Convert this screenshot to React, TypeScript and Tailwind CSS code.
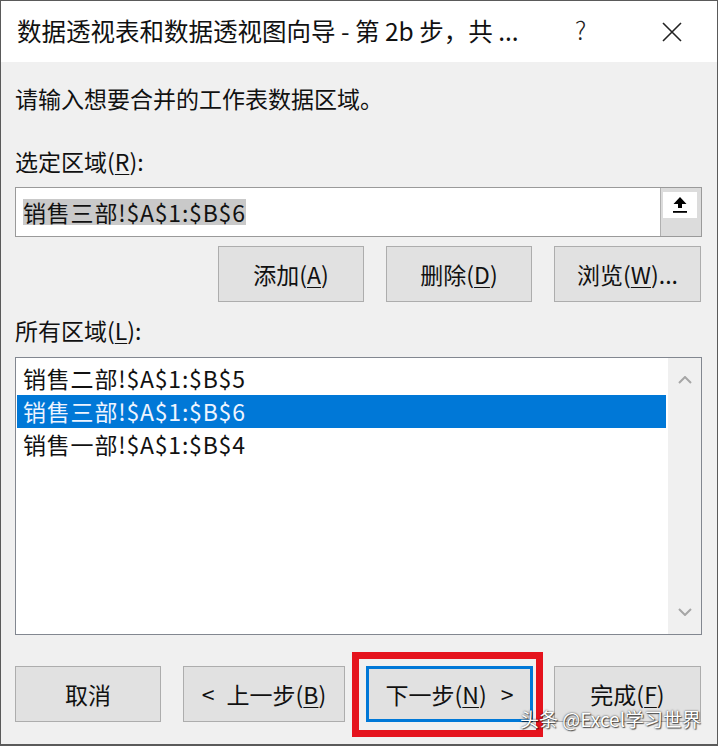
import React from "react";

const font = { fontFamily: '"Noto Sans CJK SC", "Noto Sans", sans-serif' };

function U({ c }: { c: string }) {
  return <span className="underline underline-offset-[3px] decoration-1">{c}</span>;
}

function Btn({ w, children, border = "border border-[#adadad]" }: { w: string; children: React.ReactNode; border?: string }) {
  return (
    <div
      className={`${w} h-[56px] shrink-0 flex items-center justify-center bg-[#e1e1e1] ${border} text-[23px] text-[#111]`}
    >
      {children}
    </div>
  );
}

export default function App() {
  return (
    <div
      className="w-[718px] h-[746px] bg-[#f0f0f0] border border-[#5a5a5a] border-b-2 flex flex-col overflow-hidden relative"
      style={font}
    >
      {/* Title bar */}
      <div className="h-[61px] shrink-0 bg-white flex items-center pl-[16px] relative">
        <span className="text-[24.5px] text-[#111] leading-none">
          数据透视表和数据透视图向导 - 第 2b 步，共 ...
        </span>
        <span className="absolute left-[574px] top-[16px] text-[25px] text-[#222] font-light leading-none">?</span>
        <svg className="absolute left-[660px] top-[20px]" width="22" height="22" viewBox="0 0 22 22">
          <path d="M2 2 L20 20 M20 2 L2 20" stroke="#222" strokeWidth="1.6" fill="none" />
        </svg>
      </div>

      {/* Body */}
      <div className="flex flex-col pl-[14px] pr-[15px]">
        <div className="mt-[20px] h-[32px] leading-[32px] text-[23px] text-[#111]">
          请输入想要合并的工作表数据区域。
        </div>
        <div className="mt-[31px] h-[32px] leading-[32px] text-[23px] text-[#111]">
          选定区域(<U c="R" />):
        </div>
        <div className="mt-[10px] h-[50px] bg-white border border-[#9a9a9a] flex">
          <div className="flex-1 flex items-center pl-[7px]">
            <span className="bg-[#c9c9c9] text-[23px] text-[#111] leading-[26px] h-[26px] tracking-[0.8px]">销售三部!$A$1:$B$6</span>
          </div>
          <div className="w-[41px] h-full bg-[#dcdcdc] border-l border-[#b0b0b0] pt-[4px] pl-[2px]">
            <div className="w-[34px] h-[26px] bg-white flex items-center justify-center">
              <svg width="16" height="18" viewBox="0 0 16 18">
                <path d="M8 1 L14.5 8 L10 8 L10 12 L6 12 L6 8 L1.5 8 Z" fill="#000" />
                <rect x="1" y="15" width="14" height="1.8" fill="#000" />
              </svg>
            </div>
          </div>
        </div>
        <div className="mt-[9px] flex justify-end gap-[22px] pr-[1px]">
          <Btn w="w-[146px]">
            添加(<U c="A" />)
          </Btn>
          <Btn w="w-[146px]">
            删除(<U c="D" />)
          </Btn>
          <Btn w="w-[147px]">
            浏览(<U c="W" />)...
          </Btn>
        </div>
        <div className="mt-[12px] h-[32px] leading-[32px] text-[23px] text-[#111]">
          所有区域(<U c="L" />):
        </div>
        <div className="mt-[11px] h-[278px] bg-white border border-[#828790] flex">
          <div className="flex-1 pt-[4px] pl-[1px] pr-[2px]">
            <div className="h-[33px] flex items-center pl-[6px] text-[23px] text-[#111] tracking-[0.8px]">销售二部!$A$1:$B$5</div>
            <div className="h-[33px] flex items-center pl-[6px] text-[23px] text-[#eef4ff] bg-[#0078d7] tracking-[0.8px]">
              销售三部!$A$1:$B$6
            </div>
            <div className="h-[33px] flex items-center pl-[6px] text-[23px] text-[#111] tracking-[0.8px]">销售一部!$A$1:$B$4</div>
          </div>
          <div className="w-[33px] h-full bg-[#f0f0f0] flex flex-col items-center justify-between py-[18px]">
            <svg width="14" height="8" viewBox="0 0 14 8">
              <path d="M1 7 L7 1 L13 7" stroke="#a6a6a6" strokeWidth="2" fill="none" />
            </svg>
            <svg width="14" height="8" viewBox="0 0 14 8">
              <path d="M1 1 L7 7 L13 1" stroke="#a6a6a6" strokeWidth="2" fill="none" />
            </svg>
          </div>
        </div>
        <div className="mt-[31px] flex pr-[1px]">
          <Btn w="w-[146px]">取消</Btn>
          <div className="w-[22px]" />
          <Btn w="w-[162px]">
            <span className="mr-[12px]">&lt;</span>上一步(<U c="B" />)
          </Btn>
          <div className="w-[21px]" />
          <div className="relative">
            <Btn w="w-[167px]" border="border-[3px] border-[#0078d7]">
              下一步(<U c="N" />)<span className="ml-[14px]">&gt;</span>
            </Btn>
            <div className="absolute left-[-14px] top-[-14px] w-[191px] h-[85px] border-[7px] border-[#e5131d] pointer-events-none" />
          </div>
          <div className="w-[21px]" />
          <Btn w="w-[147px]">
            完成(<U c="F" />)
          </Btn>
        </div>
      </div>

      {/* watermark */}
      <div
        className="absolute left-[519px] top-[708px] text-[19px] text-white leading-none"
        style={{ textShadow: "0 0 2px rgba(0,0,0,0.8), 1px 1px 1px rgba(0,0,0,0.6)" }}
      >
        头条 @Excel学习世界
      </div>
    </div>
  );
}
